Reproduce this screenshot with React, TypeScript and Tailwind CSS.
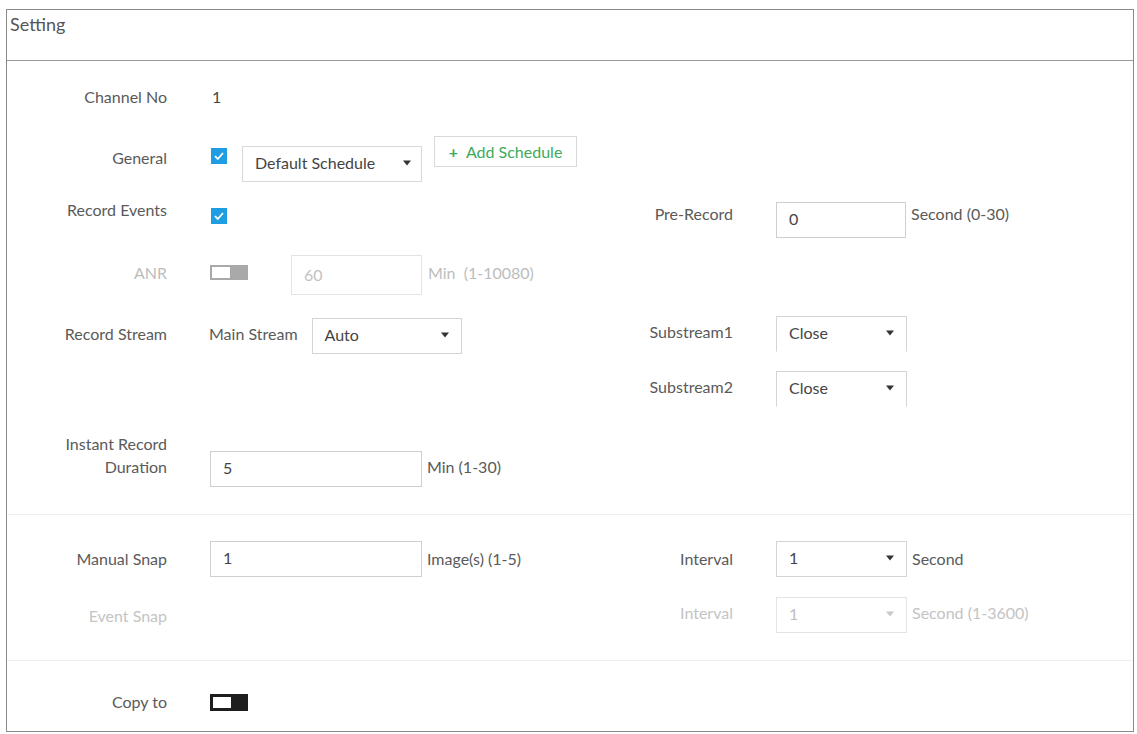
import React from "react";

function Check() {
  return (
    <div className="w-[16px] h-[16px] bg-[#1f9de3] flex items-center justify-center">
      <svg width="12" height="12" viewBox="0 0 12 12">
        <path d="M2 6.2 L4.8 9 L10 3" fill="none" stroke="#fff" strokeWidth="1.8" />
      </svg>
    </div>
  );
}

function Toggle({ dark }: { dark?: boolean }) {
  return (
    <div
      className={
        dark
          ? "w-[38px] h-[17px] bg-[#1e1e1e] p-[3px] flex"
          : "w-[38px] h-[15px] bg-[#a9a9a9] p-[2px] flex"
      }
    >
      <div className="w-[18px] h-full bg-white" />
    </div>
  );
}

function Caret({ light }: { light?: boolean }) {
  return (
    <svg width="8" height="6" viewBox="0 0 8 6">
      <path d="M0 0.5 L8 0.5 L4 5.5 Z" fill={light ? "#c8c8c8" : "#333"} />
    </svg>
  );
}

function Select({
  value,
  w,
  light,
  noBottom,
}: {
  value: string;
  w: string;
  light?: boolean;
  noBottom?: boolean;
}) {
  return (
    <div
      className={`${w} h-[36px] border ${noBottom ? "border-b-transparent" : ""} ${
        light ? "border-[#e3e3e3] text-[#bdbdbd]" : "border-[#d4d4d4] text-[#444]"
      } flex items-center justify-between pl-[12px] pr-[12px] pb-[3px]`}
    >
      <span>{value}</span>
      <Caret light={light} />
    </div>
  );
}

function Input({ value, w, light }: { value: string; w: string; light?: boolean }) {
  return (
    <div
      className={`${w} h-[36px] border ${
        light ? "border-[#e3e3e3] text-[#bdbdbd]" : "border-[#cfcfcf] text-[#444]"
      } flex items-center pl-[12px] pb-[2px]`}
    >
      {value}
    </div>
  );
}

const label = "w-[160px] text-right leading-[20px] shrink-0";
const rlabel = "w-[133px] text-right leading-[20px] shrink-0";

export default function App() {
  return (
    <div
      className="w-[1137px] h-[734px] bg-white pt-[9px] pl-[6px] text-[16px] text-[#5a5a5a]"
      style={{ fontFamily: "Lato, 'Open Sans', sans-serif" }}
    >
      <div className="w-[1128px] h-[723px] border border-[#8a8a8a] flex flex-col">
        {/* header */}
        <div className="h-[51px] border-b border-[#9a9a9a] pl-[3px] pt-[1px] text-[18px] text-[#555]">
          Setting
        </div>

        <div className="flex flex-col pt-[19px]">
          {/* Channel No */}
          <div className="flex items-center h-[34px]">
            <div className={label}>Channel No</div>
            <div className="ml-[45px] text-[#444]">1</div>
          </div>

          {/* General */}
          <div className="flex items-start h-[46px] mt-[22px]">
            <div className={`${label} mt-[12px]`}>General</div>
            <div className="ml-[44px] mt-[12px]">
              <Check />
            </div>
            <div className="ml-[15px] mt-[10px] w-[180px] h-[36px] border border-[#d9d9d9] flex items-center justify-between pl-[12px] pr-[10px] text-[#444] pb-[2px]">
              <span>Default Schedule</span>
              <Caret />
            </div>
            <div className="ml-[12px] w-[143px] h-[31px] border border-[#d9d9d9] flex items-center justify-center text-[#3daa5a]">
              <span className="mr-[8px] font-bold">+</span>Add Schedule
            </div>
          </div>

          {/* Record Events / Pre-Record */}
          <div className="flex items-start h-[38px] mt-[18px]">
            <div className="w-[593px] flex items-start shrink-0">
              <div className={label}>Record Events</div>
              <div className="ml-[44px] mt-[8px]">
                <Check />
              </div>
            </div>
            <div className={`${rlabel} mt-[4px]`}>Pre-Record</div>
            <div className="ml-[43px] mt-[2px]">
              <Input value="0" w="w-[130px]" />
            </div>
            <div className="ml-[5px] mt-[4px] leading-[20px]">Second (0-30)</div>
          </div>

          {/* ANR */}
          <div className="flex items-start h-[40px] mt-[17px]">
            <div className={`${label} mt-[8px] text-[#bdbdbd]`}>ANR</div>
            <div className="ml-[43px] mt-[10px]">
              <Toggle />
            </div>
            <div className="ml-[43px] w-[131px] h-[40px] border border-[#e3e3e3] text-[#c2c2c2] flex items-center pl-[12px]">
              60
            </div>
            <div className="ml-[6px] mt-[8px] leading-[20px] text-[#bdbdbd]">Min &nbsp;(1-10080)</div>
          </div>

          {/* Record Stream / Substream1 */}
          <div className="flex items-start h-[38px] mt-[21px]">
            <div className="w-[593px] flex items-start shrink-0">
              <div className={`${label} mt-[8px]`}>Record Stream</div>
              <div className="ml-[42px] mt-[8px] leading-[20px]">Main Stream</div>
              <div className="ml-[14px] mt-[2px]">
                <Select value="Auto" w="w-[150px]" />
              </div>
            </div>
            <div className={`${rlabel} mt-[6px]`}>Substream1</div>
            <div className="ml-[43px]">
              <Select value="Close" w="w-[131px]" noBottom />
            </div>
          </div>

          {/* Substream2 */}
          <div className="flex items-start h-[35px] mt-[17px]">
            <div className="w-[593px] shrink-0" />
            <div className={`${rlabel} mt-[6px]`}>Substream2</div>
            <div className="ml-[43px]">
              <Select value="Close" w="w-[131px]" noBottom />
            </div>
          </div>

          {/* Instant Record Duration */}
          <div className="flex items-start h-[55px] mt-[26px]">
            <div className="w-[160px] text-right leading-[23px] shrink-0">
              Instant Record
              <br />
              Duration
            </div>
            <div className="ml-[43px] mt-[19px]">
              <Input value="5" w="w-[212px]" />
            </div>
            <div className="ml-[5px] mt-[25px] leading-[20px]">Min (1-30)</div>
          </div>

          <div className="mt-[27px] border-t border-[#eeeeee]" />

          {/* Manual Snap / Interval */}
          <div className="flex items-center h-[36px] mt-[26px]">
            <div className="w-[593px] flex items-center shrink-0">
              <div className={label}>Manual Snap</div>
              <div className="ml-[43px]">
                <Input value="1" w="w-[212px]" />
              </div>
              <div className="ml-[5px]">Image(s) (1-5)</div>
            </div>
            <div className={rlabel}>Interval</div>
            <div className="ml-[43px]">
              <Select value="1" w="w-[131px]" />
            </div>
            <div className="ml-[5px]">Second</div>
          </div>

          {/* Event Snap / Interval */}
          <div className="flex items-start h-[36px] mt-[20px]">
            <div className="w-[593px] shrink-0 flex">
              <div className={`${label} mt-[9px] text-[#c4c4c4]`}>Event Snap</div>
            </div>
            <div className={`${rlabel} mt-[6px] text-[#c4c4c4]`}>Interval</div>
            <div className="ml-[43px]">
              <Select value="1" w="w-[131px]" light />
            </div>
            <div className="ml-[5px] mt-[6px] leading-[20px] text-[#c4c4c4]">Second (1-3600)</div>
          </div>

          <div className="mt-[27px] border-t border-[#eeeeee]" />

          {/* Copy to */}
          <div className="flex items-center h-[20px] mt-[31px]">
            <div className={label}>Copy to</div>
            <div className="ml-[43px]">
              <Toggle dark />
            </div>
          </div>
        </div>
      </div>
    </div>
  );
}
